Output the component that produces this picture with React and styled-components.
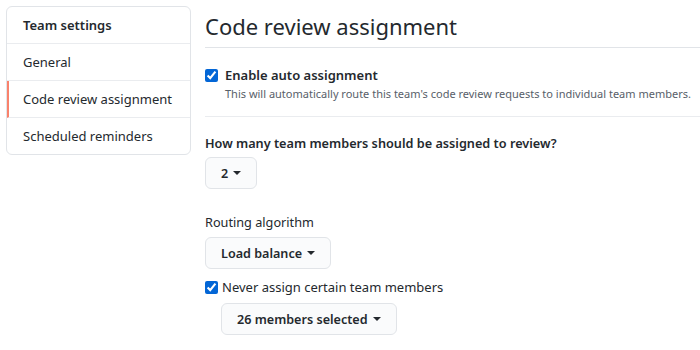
import React from 'react';
import styled, { createGlobalStyle } from 'styled-components';

const GlobalStyle = createGlobalStyle`
  body {
    margin: 0;
    background: #fff;
    font-family: "Noto Sans", "Open Sans", sans-serif;
    color: #24292e;
  }
`

const Page = styled.div`
  display: flex;
  align-items: flex-start;
  gap: 14px;
  padding: 6px 0 0 6px;
`

const Sidebar = styled.nav`
  width: 183px;
  flex-shrink: 0;
  border: 1px solid #e1e4e8;
  border-radius: 6px;
  overflow: hidden;
`

const SideHeader = styled.div`
  height: 36px;
  display: flex;
  align-items: center;
  padding: 0 16px;
  font-size: 13px;
  font-weight: 600;
  border-bottom: 1px solid #eaecef;
`

const SideItem = styled.a`
  height: 36px;
  display: flex;
  align-items: center;
  padding: 0 16px 0 ${p => (p.$active ? '14px' : '16px')};
  font-size: 13px;
  color: #24292e;
  border-left: ${p => (p.$active ? '2px solid #f9826c' : 'none')};
  border-bottom: ${p => (p.$last ? 'none' : '1px solid #eaecef')};
`

const Main = styled.main`
  flex: 1;
  min-width: 0;
`

const Title = styled.h2`
  margin: 0;
  font-size: 22px;
  font-weight: 400;
  line-height: 40px;
  padding-bottom: 1px;
  border-bottom: 1px solid #e1e4e8;
`

const Section = styled.div`
  padding: ${p => p.$pad || '0'};
  border-bottom: ${p => (p.$divided ? '1px solid #eaecef' : 'none')};
`

const CheckRow = styled.label`
  display: flex;
  align-items: center;
  gap: ${p => p.$gap || '7px'};
  font-size: 13px;
  font-weight: ${p => (p.$bold ? 600 : 400)};
`

const Check = styled.input`
  margin: 0;
  width: 13px;
  height: 13px;
  accent-color: #0366d6;
`

const Note = styled.p`
  margin: 2px 0 0 20px;
  font-size: 11px;
  color: #586069;
`

const Label = styled.div`
  font-size: 12.7px;
  font-weight: ${p => (p.$bold ? 600 : 400)};
  margin-bottom: ${p => p.$gap || '8px'};
`

const Button = styled.button`
  display: inline-flex;
  align-items: center;
  gap: 5px;
  height: 32px;
  padding: 0 15px;
  font-family: inherit;
  font-size: 12.6px;
  font-weight: 600;
  color: #24292e;
  background: #fafbfc;
  border: 1px solid #e1e4e8;
  border-radius: 6px;
  margin-left: ${p => p.$indent || '0'};
`

const Caret = styled.span`
  width: 0;
  height: 0;
  border-left: 4px solid transparent;
  border-right: 4px solid transparent;
  border-top: 4px solid #24292e;
`

export default function App() {
  return (
    <>
      <GlobalStyle />
      <Page>
        <Sidebar>
          <SideHeader>Team settings</SideHeader>
          <SideItem>General</SideItem>
          <SideItem $active>Code review assignment</SideItem>
          <SideItem $last>Scheduled reminders</SideItem>
        </Sidebar>
        <Main>
          <Title>Code review assignment</Title>
          <Section $divided $pad="18px 0 15px">
            <CheckRow $bold>
              <Check type="checkbox" defaultChecked />
              Enable auto assignment
            </CheckRow>
            <Note>This will automatically route this team's code review requests to individual team members.</Note>
          </Section>
          <Section $pad="17px 0 0">
            <Label $bold $gap="5px">How many team members should be assigned to review?</Label>
            <Button>2 <Caret /></Button>
          </Section>
          <Section $pad="24px 0 0">
            <Label $gap="6px">Routing algorithm</Label>
            <Button>Load balance <Caret /></Button>
          </Section>
          <Section $pad="9px 0 0">
            <CheckRow $gap="4px">
              <Check type="checkbox" defaultChecked />
              Never assign certain team members
            </CheckRow>
          </Section>
          <Section $pad="7px 0 0">
            <Button $indent="16px">26 members selected <Caret /></Button>
          </Section>
        </Main>
      </Page>
    </>
  );
}
